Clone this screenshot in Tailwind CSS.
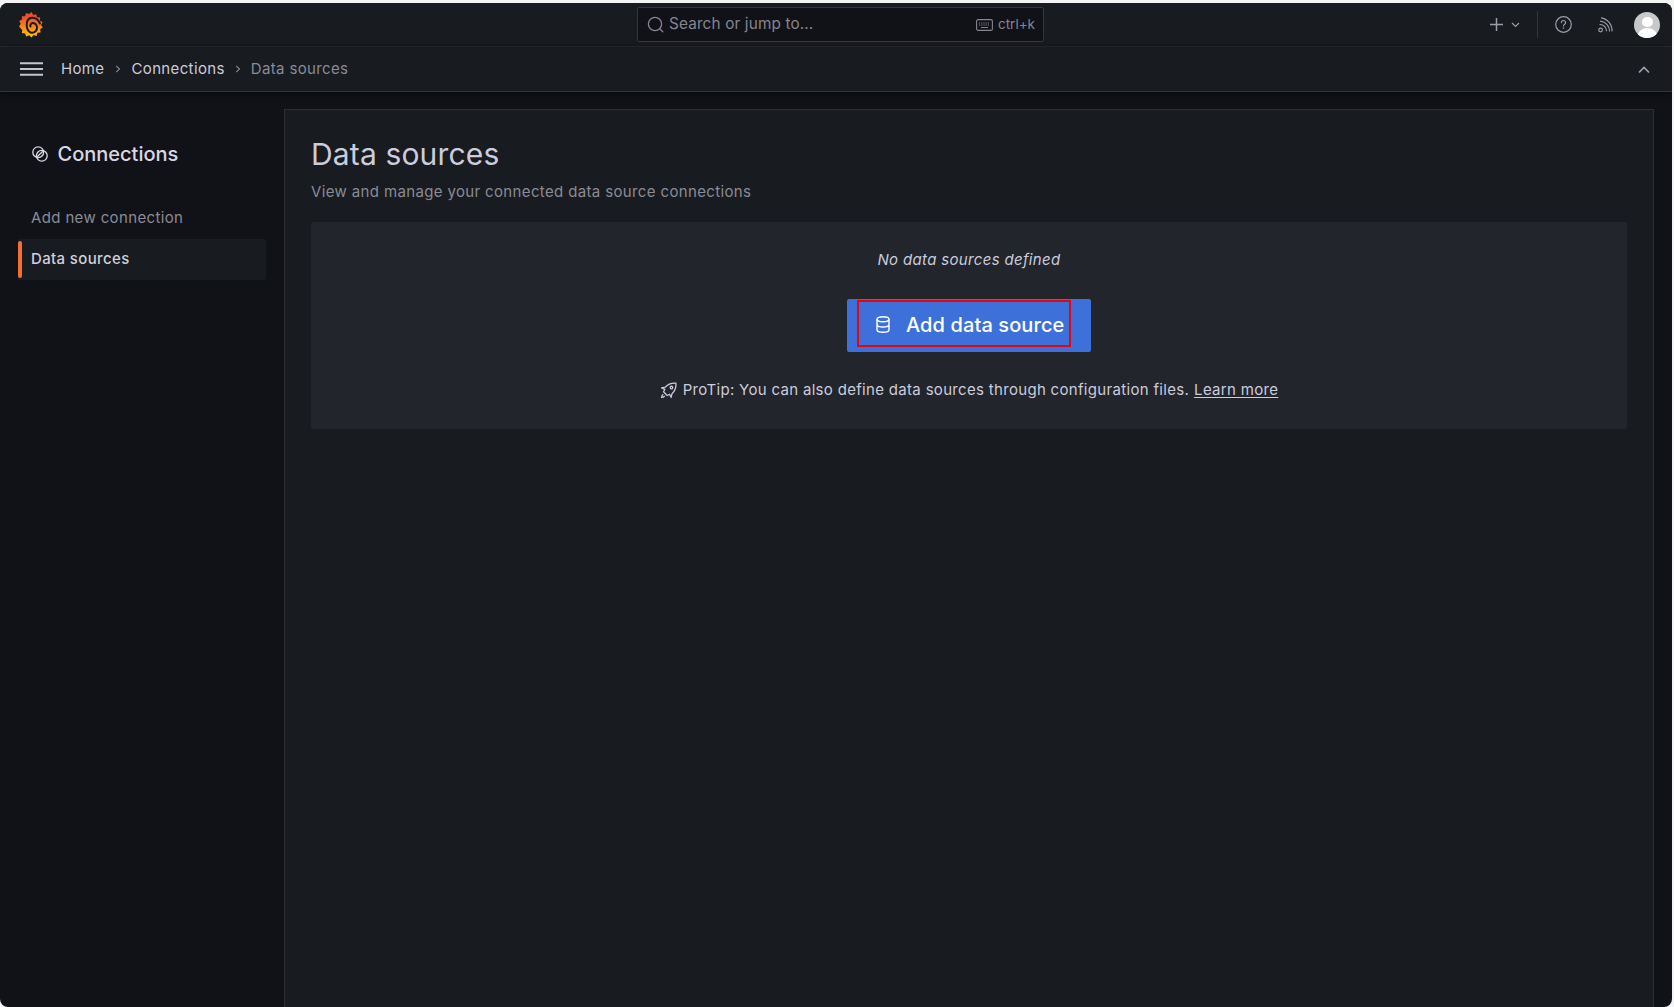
<!DOCTYPE html>
<html lang="en">
<head>
  <meta charset="utf-8">
  <title>Data sources - Connections - Grafana</title>
  <script src="https://cdn.jsdelivr.net/npm/@tailwindcss/browser@4"></script>
</head>
<body class="w-[1674px] h-[1007px] overflow-hidden bg-[#f4f4f4] font-[Inter,sans-serif]">
  <div class="mt-[3px] w-[1672px] h-[1004px] rounded-lg overflow-hidden flex flex-col bg-[#111217]">

    <!-- top bar -->
    <header class="h-[44px] shrink-0 flex items-center bg-[#181b1f] border-b border-[#2c2e33]">
      <div class="w-[637px] shrink-0 pl-[19px]">
        <svg class="w-6 h-[27px]" viewBox="0 0 24 27">
          <defs>
            <linearGradient id="logo" x1="0.5" y1="0" x2="0.5" y2="1">
              <stop offset="0.2" stop-color="#ee4f2a"/>
              <stop offset="0.6" stop-color="#f78a1e"/>
              <stop offset="1" stop-color="#fcc70c"/>
            </linearGradient>
          </defs>
          <path fill="url(#logo)" d="M12.600 1l1.600 3.100 3-.9.8 3.100 3.200.2-.4 3.200 2.800 1.500-1.600 2.800 1.800 2.600-2.600 1.700.4 3.200-3.200.3-.9 3.100-3-.9-2 2.500-2.300-2.200-3 1.100-1.100-3-3.200-.3.3-3.200L0 15.400l1.700-2.700L.2 10l2.800-1.500-.1-3.200 3.200-.1 1-3.100 3 1z"/>
          <path fill="none" stroke="#181b1f" stroke-width="2" stroke-linecap="round" d="M21 12.500C19 8 15.500 6.600 12.700 6.800 9 7.200 7.500 11 7.700 15c.3 4 2.800 6.800 5.300 6.800 3 0 5.300-2.800 5-5.800-.2-2.500-2.500-4.200-4.500-4-1.700.2-2.500 1.800-2 3.500"/>
        </svg>
      </div>
      <div class="w-[407px] h-[35px] shrink-0 flex items-center pl-[9px] pr-[8px] bg-[#111217] border border-[#34363b] rounded-[2px] text-[#84858f]">
        <svg class="w-[17px] h-[17px]" viewBox="0 0 17 17" fill="none" stroke="currentColor" stroke-width="1.300" stroke-linecap="round">
          <circle cx="8" cy="8" r="6.600"/><path d="M13 13l2.800 2.800"/>
        </svg>
        <span class="ml-[5px] text-[15.300px] tracking-[0.01em]">Search or jump to...</span>
        <svg class="ml-auto w-[17px] h-[12px]" viewBox="0 0 17 12" fill="none" stroke="currentColor" stroke-width="1.100">
          <rect x=".6" y=".6" width="15.800" height="10.800" rx="1.500"/><path d="M3 4h11M3 6h11" stroke-dasharray="1.200 1"/><path d="M5 8.500h7"/>
        </svg>
        <span class="ml-[5px] text-[13.500px]">ctrl+k</span>
      </div>
      <div class="ml-auto flex items-center text-[#9c9da6]">
        <svg class="-mr-px w-[15px] h-[15px]" viewBox="0 0 15 15" fill="none" stroke="currentColor" stroke-width="1.500"><path d="M7.500 1v13M1 7.500h13"/></svg>
        <svg class="ml-[8px] w-[9px] h-[6px]" viewBox="0 0 9 6" fill="none" stroke="currentColor" stroke-width="1.200"><path d="M1 1l3.500 3.500L8 1"/></svg>
        <div class="ml-[17px] w-px h-[27px] bg-[#33353a]"></div>
        <svg class="ml-[17px] mr-px w-[17px] h-[17px]" viewBox="0 0 17 17" fill="none" stroke="currentColor" stroke-width="1.200">
          <circle cx="8.500" cy="8.500" r="7.800"/><path d="M6.400 6.600a2.100 2.100 0 1 1 3 1.900c-.6.3-.9.7-.9 1.400" stroke-linecap="round"/><circle cx="8.500" cy="12" r=".8" fill="currentColor" stroke="none"/>
        </svg>
        <svg class="ml-[25px] w-[15px] h-[17px]" viewBox="0 0 15 17" fill="none" stroke="currentColor" stroke-width="1.200">
          <circle cx="2.600" cy="14" r="1.800"/><path d="M1.500 8.500a6.500 6.500 0 0 1 7 6.800M2 5.200a10 10 0 0 1 9.600 10.200M3 1.800a13 13 0 0 1 11 13.600"/>
        </svg>
        <div class="ml-[21px] mr-[12px] w-[26px] h-[26px] rounded-full bg-[#c8c8c8] overflow-hidden flex flex-col items-center">
          <div class="mt-[5px] w-[11px] h-[12px] rounded-full bg-white"></div>
          <div class="mt-[1px] w-[21px] h-[12px] rounded-t-full bg-white"></div>
        </div>
      </div>
    </header>

    <!-- breadcrumb bar -->
    <div class="h-[45px] shrink-0 flex items-center bg-[#181b1f] border-b border-[#33353a] shadow-[0_1px_6px_rgba(0,0,0,0.6)] text-[15px] tracking-[0.024em] text-[#ccccdc]">
      <svg class="ml-[20px] w-[23px] h-[14px]" viewBox="0 0 23 14" fill="none" stroke="#c4c5d3" stroke-width="2"><path d="M0 1.200h23M0 7h23M0 12.800h23"/></svg>
      <span class="ml-[18px]">Home</span>
      <svg class="ml-[11px] mr-[10px] w-[6px] h-[8px]" viewBox="0 0 6 8" fill="none" stroke="#8c8d97" stroke-width="1.100"><path d="M1.200 .8L4.500 4 1.200 7.200"/></svg>
      <span>Connections</span>
      <svg class="mx-[10px] w-[6px] h-[8px]" viewBox="0 0 6 8" fill="none" stroke="#8c8d97" stroke-width="1.100"><path d="M1.200 .8L4.500 4 1.200 7.200"/></svg>
      <span class="text-[#8a8b96]">Data sources</span>
      <svg class="ml-auto mr-[22px] translate-y-[1px] w-[12px] h-[8px]" viewBox="0 0 12 8" fill="none" stroke="#a0a1ab" stroke-width="1.700"><path d="M1 6.500l5-5 5 5"/></svg>
    </div>

    <div class="flex flex-1 min-h-0">
      <!-- side nav -->
      <aside class="w-[284px] shrink-0 pl-[18px] pt-[47px]">
        <div class="flex items-center pl-[14px] h-[30px] text-[#d8d8e4] text-[20px] font-medium">
          <svg class="w-[16px] h-[16px]" viewBox="0 0 16 16" fill="none" stroke="currentColor" stroke-width="1.300">
            <circle cx="6.200" cy="6.200" r="5.400"/><circle cx="9.800" cy="9.800" r="5.400"/><path d="M5.200 10.800l5.600-5.600"/>
          </svg>
          <span class="ml-[9.500px]">Connections</span>
        </div>
        <div class="mt-[31px] pl-[13px] h-[36px] flex items-center text-[15px] tracking-[0.024em] text-[#8a8b96]">Add new connection</div>
        <div class="mt-[3px] w-[248px] h-[41px] flex items-center rounded-r-[2px] bg-[#181b1f] text-[15px] font-medium tracking-[0.024em] text-[#d0d0de] relative pl-[13px]">
          <span class="absolute left-0 top-[2px] bottom-[2px] w-1 rounded-[2px] bg-[#f46f32]"></span>
          Data sources
        </div>
      </aside>

      <!-- page -->
      <main class="mt-[17px] w-[1370px] shrink-0 bg-[#181b1f] border border-b-0 border-[#2c2e33] px-[26px] pt-[22px]">
        <h1 class="text-[30px] leading-[44px] text-[#ccccdc] tracking-[0.005em]">Data sources</h1>
        <p class="mt-[5px] text-[15px] leading-[22px] tracking-[0.024em] text-[#8a8b96]">View and manage your connected data source connections</p>
        <section class="mt-[19px] w-[1316px] h-[207px] bg-[#22252b] flex flex-col items-center rounded-[2px]">
          <p class="mt-[27px] text-[15px] leading-[22px] italic tracking-[0.022em] text-[#ccccdc]">No data sources defined</p>
          <div class="mt-[28px] w-[244px] h-[53px] relative flex items-center bg-[#3d71d9] rounded-[2px] text-white text-[20px] font-medium tracking-[0.005em] pl-[59px] pb-[2px]">
            <svg class="absolute left-[29px] top-[17px] w-[14px] h-[17px]" viewBox="0 0 14 17" fill="none" stroke="currentColor" stroke-width="1.400">
              <ellipse cx="7" cy="3.200" rx="6" ry="2.500"/><path d="M1 3.200v10.600c0 1.400 2.700 2.500 6 2.500s6-1.100 6-2.500V3.200M1 8.500c0 1.400 2.700 2.500 6 2.500s6-1.100 6-2.500"/>
            </svg>
            Add data source
            <span class="absolute left-[10px] top-[1px] w-[214px] h-[47px] border-2 border-[#e30613]"></span>
          </div>
          <p class="mt-[27px] flex items-center text-[15px] leading-[22px] tracking-[0.021em] text-[#ccccdc]">
            <svg class="mr-[6px] w-[17px] h-[17px]" viewBox="0 0 16 16" fill="none" stroke="currentColor" stroke-width="1.200" stroke-linejoin="round">
              <path d="M15 1c-4.500-.3-7.500.8-10 3.800L1.500 5.500l3 1.500-1.200 2.200 3.500 3.500L9 11.500l1.500 3 .8-3.500C14.300 8.500 15.300 5.500 15 1z"/><circle cx="10.800" cy="5.200" r="1.200"/><path d="M3 11.500c-1 .8-1.500 2-1.500 3 1 0 2.200-.5 3-1.500"/>
            </svg>
            ProTip: You can also define data sources through configuration files.<a class="ml-[5px] underline underline-offset-2" href="#">Learn more</a>
          </p>
        </section>
      </main>
    </div>
  </div>
</body>
</html>
